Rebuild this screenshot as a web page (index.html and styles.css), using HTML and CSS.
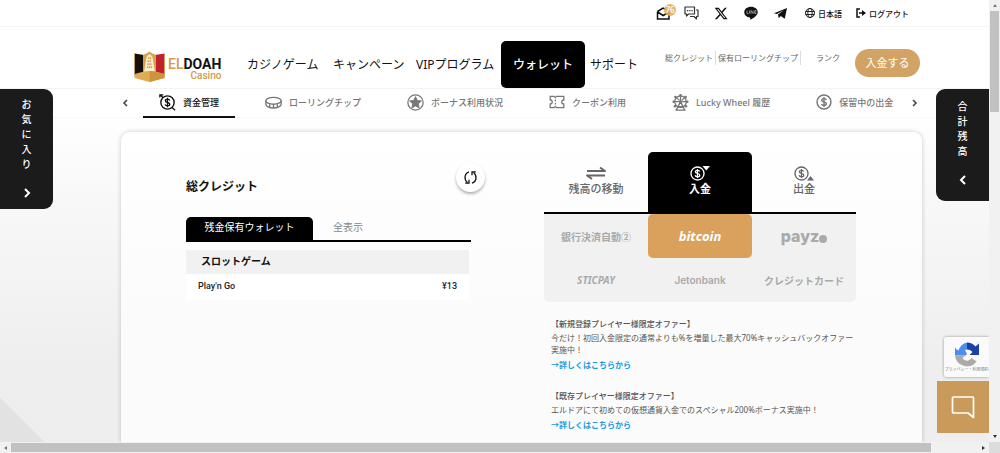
FILE: index.html
```html
<!DOCTYPE html>
<html lang="ja">
<head>
<meta charset="utf-8">
<meta name="viewport" content="width=device-width, initial-scale=1">
<title>ELDOAH Casino</title>
<link rel="stylesheet" href="styles.css">
</head>
<body>
<svg class="defs" aria-hidden="true">
  <symbol id="coin" viewBox="0 0 20 20"><circle cx="10" cy="10" r="8.7" fill="none" stroke="currentColor" stroke-width="1.8"/><path d="M13 7.4C12.6 6.2 11.5 5.7 10 5.7 8.300 5.700 7.100 6.500 7.100 7.800c0 3.100 5.900 1.300 5.900 4.400 0 1.300-1.200 2.100-3 2.100-1.700 0-2.800-.7-3.200-1.900M10 3.900v12.200" fill="none" stroke="currentColor" stroke-width="1.7"/></symbol>
</svg>
<div class="frame">
  <div class="page">
    <header>
      <div class="topbar">
        <a class="mail" href="#" aria-label="メール"><svg viewBox="0 0 16 14" width="16" height="14"><path d="M1.500 5.500v7.500h11.500V5.500M1.500 5.500 7 2l3 1.500M1.500 6 7.200 9.500 13 6" fill="none" stroke="#111" stroke-width="1.500"/></svg><span class="badge">76</span></a>
        <a href="#" aria-label="チャット"><svg viewBox="0 0 15 14" width="15" height="14"><path d="M1 1h9.500v7H4.500L2.500 10V8H1zM12 4h2v6.500h-1.500v2.500l-2.500-2.500H6" fill="none" stroke="#333" stroke-width="1.200" stroke-linejoin="round"/><path d="M3 4.600h1.300M5.200 4.600h1.300M7.400 4.600h1.300" stroke="#333" stroke-width="1.200"/></svg></a>
        <a href="#" aria-label="X"><svg viewBox="0 0 24 24" width="13" height="13"><path d="M18.200 1.500h3.700l-8 9.200L23.300 22.500h-7.400l-5.800-7.100-6.600 7.100H-.2l8.600-9.500L-.6 1.500H7l5.200 6.600zm-1.300 18.900h2L5.800 3.500H3.700z" fill="#111"/></svg></a>
        <a href="#" aria-label="LINE"><svg viewBox="0 0 26 25" width="14" height="14"><path d="M13 1C5.900 1 .5 5.400.5 11c0 5 4.200 9 10.300 9.700 1 .2.900 1.500.6 3.300 0 .6.400.8 1 .5 5.400-2.900 13.100-7.500 13.100-13.500C25.500 5.400 20.100 1 13 1z" fill="#111"/><path d="M5.500 8v5.500h3M10.500 7.500v6M13 14V8l4 5.500V8M23 8h-3v5.500h3M20 10.800h3" fill="none" stroke="#ccc" stroke-width="1.200"/></svg></a>
        <a href="#" aria-label="Telegram"><svg viewBox="0 0 26 22" width="13" height="11"><path d="M0 10.500 26 0l-4.500 21.500-8-5.500-4 4.500-1.500-7.500L20.500 3.500 6 12z" fill="#111"/></svg></a>
        <button class="lang"><svg viewBox="0 0 20 20" width="10" height="10"><g fill="none" stroke="#111" stroke-width="1.800"><circle cx="10" cy="10" r="9"/><ellipse cx="10" cy="10" rx="4.300" ry="9"/><path d="M1 7h18M1 13h18"/></g></svg>日本語</button>
        <a class="logout" href="#"><svg viewBox="0 0 20 20" width="10" height="10"><path d="M8 2H2v16h6" fill="none" stroke="#111" stroke-width="3"/><path d="M6 8.500h6V4l8 6-8 6v-4.500H6z" fill="#111"/></svg>ログアウト</a>
      </div>
      <div class="mainbar">
        <a class="logo" href="#" aria-label="ELDOAH Casino">
          <svg viewBox="0 0 62 62" width="31" height="31"><path d="M1 5l19 3v37L1 49z" fill="#15100e"/><path d="M61 5 42 8v37l19 4z" fill="#c3202c"/><path d="M31 1c5 4 9 5 13 7v38H18V8c4-2 8-3 13-7z" fill="#d7a14f"/><path d="M31 6c5 3 7 7 7 12l4 24H20l4-24c0-5 2-9 7-12z" fill="#fbedcb"/><path d="M27.500 14h7M27 20h8M26.500 26h9M26 32h10" stroke="#c38a35" stroke-width="2.500" stroke-dasharray="3 1"/><path d="M1 5v44M61 5v44" stroke="#d7a14f" stroke-width="1.500"/><path d="M1 46c10-3 20-6 30-6s20 3 30 6v8l-30 8L1 54z" fill="#e0ab55"/><path d="M31 40c10 0 20 3 30 6v8l-30 8z" fill="#cf923d"/></svg>
          <span class="word"><span class="name"><i>EL</i><b>DOAH</b></span><span class="sub">Casino</span></span>
        </a>
        <nav class="menu">
          <a href="#">カジノゲーム</a><a href="#">キャンペーン</a><a href="#">VIPプログラム</a><a class="on" href="#">ウォレット</a><a href="#">サポート</a>
        </nav>
        <div class="stats"><span>総クレジット</span><span>保有ローリングチップ</span><span class="rank">ランク</span></div>
        <button class="deposit">入金する</button>
      </div>
      <nav class="subnav">
        <button class="arrow" aria-label="前へ"><svg viewBox="0 0 6 8" width="6" height="8"><path d="M5 1 2 4l3 3" fill="none" stroke="#444" stroke-width="1.600"/></svg></button>
        <div class="subs">
          <a class="on" href="#"><svg width="17" height="17" viewBox="0 0 20 20"><use href="#coin" x="1" y="1" width="18" height="18"/><path d="M1 1l4 3.500M19 19l-4-3.500M1 4V1h4" fill="none" stroke="currentColor" stroke-width="1.500"/></svg>資金管理</a>
          <a href="#"><svg width="17" height="17" viewBox="0 0 20 20"><g fill="none" stroke="currentColor" stroke-width="1.600"><ellipse cx="10" cy="8" rx="9" ry="4"/><path d="M1 8v4c0 2.500 4 4.500 9 4.500s9-2 9-4.500V8M5.500 12v4M10 12.500v4M14.500 12v4"/></g></svg>ローリングチップ</a>
          <a href="#"><svg width="17" height="17" viewBox="0 0 20 20"><circle cx="10" cy="10" r="9" fill="none" stroke="currentColor" stroke-width="1.500"/><path d="M10 3l2.100 4.500 4.900.6-3.600 3.400.9 4.900L10 14l-4.300 2.400.9-4.900L3 8.100l4.900-.6z" fill="currentColor" stroke="currentColor" stroke-linejoin="round"/></svg>ボーナス利用状況</a>
          <a href="#"><svg width="16" height="16" viewBox="0 0 20 20"><path d="M1.500 3h5l1.500 1.500L9.500 3h9v4.500a2.500 2.500 0 0 0 0 5V17h-9L8 15.500 6.500 17h-5v-4.500a2.500 2.500 0 0 0 0-5z" fill="none" stroke="currentColor" stroke-width="1.600"/><path d="M8 7v2M8 11v2" stroke="currentColor" stroke-width="1.500"/></svg>クーポン利用</a>
          <a href="#"><svg width="17" height="17" viewBox="0 0 20 20"><g fill="none" stroke="currentColor" stroke-width="1.500"><circle cx="10" cy="9" r="6.800"/><path d="M10 2v5M3 9h5M12 9h5M5 4l3.500 3.500M15 4l-3.500 3.500M10 9l-5 10M10 9l5 10M4 19h12M7.500 15h5"/></g><g fill="currentColor"><circle cx="10" cy="9" r="2"/><circle cx="10" cy="1.500" r="1.500"/><circle cx="4" cy="3.500" r="1.500"/><circle cx="16" cy="3.500" r="1.500"/><circle cx="2" cy="9" r="1.500"/><circle cx="18" cy="9" r="1.500"/><circle cx="3.500" cy="14.500" r="1.500"/><circle cx="16.500" cy="14.500" r="1.500"/></g></svg>Lucky Wheel 履歴</a>
          <a href="#"><svg width="16" height="16"><use href="#coin"/></svg>保留中の出金</a>
        </div>
        <button class="arrow" aria-label="次へ"><svg viewBox="0 0 6 8" width="6" height="8"><path d="M1 1l3 3-3 3" fill="none" stroke="#444" stroke-width="1.600"/></svg></button>
      </nav>
    </header>
    <main class="card">
      <section class="credit">
        <div class="head"><h2>総クレジット</h2><button class="refresh" aria-label="更新"><svg viewBox="0 0 20 20" width="15" height="15"><path d="M8 2.500C1 5 1.500 13 6 17M12 17.500C19 15 18.500 7 14 3" fill="none" stroke="#111" stroke-width="1.700"/><path d="M3 17.500h5V13M17 2.500h-5V7" fill="none" stroke="#111" stroke-width="1.700"/></svg></button></div>
        <div class="tabs"><button class="on">残金保有ウォレット</button><button>全表示</button></div>
        <table>
          <thead><tr><th colspan="2">スロットゲーム</th></tr></thead>
          <tbody><tr><td>Play'n Go</td><td class="num">¥13</td></tr></tbody>
        </table>
      </section>
      <section class="funds">
        <div class="modes">
          <button><svg width="20" height="16" viewBox="0 0 20 16"><path d="M1 6h18L14 2.500M19 10.500H1l5 3.500" fill="none" stroke="currentColor" stroke-width="2" stroke-linejoin="round"/></svg>残高の移動</button>
          <button class="on"><svg width="20" height="16" viewBox="0 0 20 16"><use href="#coin" x="0" y="1" width="15" height="15"/><path d="M12.500 1h7.500l-3.700 4.500z" fill="currentColor"/></svg>入金</button>
          <button><svg width="20" height="16" viewBox="0 0 20 16"><use href="#coin" x="0" y="1" width="15" height="15"/><path d="M13 15.500h7L16.500 11z" fill="currentColor"/></svg>出金</button>
        </div>
        <div class="methods">
          <button>銀行決済自動②</button>
          <button class="bitcoin">bitcoin</button>
          <button class="payz">payz<span class="dot"></span></button>
          <button class="sticpay">STICPAY</button>
          <button class="jeton">Jetonbank</button>
          <button>クレジットカード</button>
        </div>
        <div class="offers">
          <article><h3>【新規登録プレイヤー様限定オファー】</h3><p>今だけ！初回入金限定の通常よりも%を増量した最大70%キャッシュバックオファー実施中！</p><a href="#">→詳しくはこちらから</a></article>
          <article><h3>【既存プレイヤー様限定オファー】</h3><p>エルドアにて初めての仮想通貨入金でのスペシャル200%ボーナス実施中！</p><a href="#">→詳しくはこちらから</a></article>
        </div>
      </section>
    </main>
    <button class="side left"><span>お気に入り</span><svg viewBox="0 0 8 10" width="8" height="10"><path d="M2 1l4 4-4 4" fill="none" stroke="#fff" stroke-width="2"/></svg></button>
    <button class="side right"><span>合計残高</span><svg viewBox="0 0 8 10" width="8" height="10"><path d="M6 1 2 5l4 4" fill="none" stroke="#fff" stroke-width="2"/></svg></button>
    <div class="floats">
      <div class="captcha"><svg viewBox="0 0 52 50" width="26" height="25"><path d="M4 14l5 3A24 24 0 0 1 26 1v14l-4 1 4 8-3 3H2V10z" fill="#4a90e8"/><path d="M26 1a24 24 0 0 1 17 8l7-6v23H31l6-6a12 12 0 0 0-11-5z" fill="#1c3fa8"/><path d="M2 27h21l-6 5c5 7 13 7 18 0l10 7A24 24 0 0 1 2 27z" fill="#aaa"/></svg><small>プライバシー・利用規約</small></div>
      <button class="chat" aria-label="チャットを開く"><svg viewBox="0 0 24 24" width="24" height="24"><path d="M2.500 2h19a1 1 0 0 1 1 1v19.500L17 18H2.500a1 1 0 0 1-1-1V3a1 1 0 0 1 1-1z" fill="none" stroke="#fff" stroke-width="1.700" stroke-linejoin="round"/></svg></button>
    </div>
  </div>
  <div class="vbar"><i class="up"></i><span class="thumb"></span><i class="down"></i></div>
  <div class="hbar"><i class="prev"></i><span class="thumb"></span><i class="next"></i></div>
  <div class="corner"></div>
</div>
</body>
</html>
```
FILE: styles.css
```css
* { box-sizing: border-box; }
body { margin: 0; font-family: "Noto Sans", "Noto Sans CJK JP", sans-serif; font-size: 8px; color: #111; }
button { font: inherit; color: inherit; border: 0; background: none; padding: 0; margin: 0; cursor: pointer; }
a { color: inherit; text-decoration: none; }
h2, h3, p { margin: 0; }
svg { display: block; flex: none; }
.defs { position: absolute; width: 0; height: 0; }

.frame { display: grid; grid-template-columns: minmax(0, 1fr) 11px; grid-template-rows: minmax(0, 1fr) 11px; height: 100vh; overflow: hidden; }
.page {
  position: relative; display: flex; flex-direction: column; overflow: hidden;
  background: linear-gradient(45deg, #e2e2e2 31px, transparent 32px), linear-gradient(#fff 110px, #f8f8f8 200px, #eeeeee 370px);
}

/* Header */
header { background: #fff; }
.topbar { display: flex; justify-content: flex-end; align-items: center; height: 27px; padding-right: 80px; gap: 16px; border-bottom: 1px solid #f3f3f3; }
.topbar a, .topbar button { display: flex; align-items: center; gap: 3px; font-weight: 500; }
.mail { position: relative; margin-right: -4px; }
.topbar .badge { position: absolute; left: 8px; top: -2px; width: 12px; height: 12px; border-radius: 6px; background: #e3ad5c; color: #fff; line-height: 12px; text-align: center; opacity: .9; }
.lang { margin-left: 2px; }
.topbar .logout { margin-left: -2px; }
.mainbar { display: flex; align-items: center; height: 62px; padding: 0 69px 0 134px; border-bottom: 1px solid #f3f3f3; }
.logo { display: flex; align-items: center; gap: 3px; width: 113px; padding-top: 18px; }
.word { display: flex; flex-direction: column; align-items: flex-end; padding-top: 4px; font-family: Roboto, sans-serif; }
.name { font-size: 14px; line-height: 14px; }
.name i { font-style: normal; font-weight: 500; color: #d19a4c; }
.sub { font-size: 10px; line-height: 10px; font-weight: 500; color: #d19a4c; }
.menu { display: grid; grid-template-columns: 86px 83px 85px 84px auto; align-items: center; font-size: 12px; line-height: 47px; padding-top: 14px; white-space: nowrap; }
.menu .on { background: #000; color: #fff; font-weight: 500; border-radius: 5px; text-align: center; }
.menu a:last-child { padding-left: 5px; }
.stats { display: flex; margin-left: auto; color: #666; line-height: 14px; white-space: nowrap; }
.stats span { padding: 0 2px; border-right: 1px solid #ddd; }
.stats .rank { border: 0; padding: 0 15px; }
.deposit { width: 65px; height: 28px; margin-top: 10px; border-radius: 14px; background: #d3a365; color: #fff; font-size: 11px; line-height: 28px; }
.subnav { display: flex; align-items: center; height: 29px; padding: 0 71px 0 122px; border-bottom: 1px solid #f7f7f7; }
.subs { display: flex; gap: 14px; margin: 0 auto 0 15px; color: #777; font-size: 9px; font-weight: 500; white-space: nowrap; }
.subs a { display: flex; align-items: center; gap: 7px; height: 29px; padding: 0 16px; border-bottom: 2px solid transparent; }
.subs .on { color: #111; border-color: #111; }

/* Wallet card */
.card { flex: 1; display: grid; grid-template-columns: 285fr 312fr; gap: 73px; margin: 14px 67px 0 121px; padding: 20px 66px 0 65px; background: linear-gradient(#fff, #fbfbfb 60%); border-radius: 9px 9px 0 0; box-shadow: 0 0 5px rgba(0, 0, 0, .2); }
.head { display: flex; align-items: center; justify-content: space-between; height: 65px; margin-right: -14px; }
.head h2 { font-size: 12px; font-weight: 700; padding-top: 3px; }
.refresh { display: grid; place-items: center; width: 29px; height: 29px; margin-bottom: 14px; border-radius: 50%; background: #fff; box-shadow: 0 2px 3px rgba(0, 0, 0, .3); }
.tabs { display: flex; border-bottom: 2px solid #000; font-size: 10px; line-height: 21px; color: #888; }
.tabs button { padding: 0 20px 2px; height: 23px; }
.tabs .on { width: 127px; background: #000; color: #fff; border-radius: 5px 5px 0 0; padding: 0 0 2px; }
table { width: calc(100% - 2px); margin-top: 8px; border-collapse: collapse; background: #fff; }
th { height: 24px; padding: 0 15px 2px; background: #f1f1f1; font-size: 10px; line-height: 14px; text-align: left; }
td { height: 26px; padding: 0 12px 2px; font: 500 9px/14px Roboto, sans-serif; color: #222; }
.num { text-align: right; }

.modes { display: grid; grid-template-columns: repeat(3, 1fr); border-bottom: 2px solid #000; color: #666; font-size: 11px; line-height: 16px; font-weight: 500; }
.modes button { display: flex; flex-direction: column; align-items: center; height: 60px; padding-top: 13px; }
.modes .on { background: #000; color: #fff; border-radius: 5px 5px 0 0; font-weight: 700; }
.methods { display: grid; grid-template-columns: repeat(3, 1fr); grid-auto-rows: 44px; background: #f1f1f1; border-radius: 0 0 5px 5px; color: #aaa; font-size: 10px; font-weight: 700; }
.methods .bitcoin { background: #d9a15c; color: #fff; border-radius: 5px; font-size: 13px; font-style: italic; }
.methods .payz { display: flex; align-items: center; justify-content: center; font: 800 16px Inter, sans-serif; }
.dot { width: 8px; height: 8px; margin-top: 6px; border-radius: 50%; background: currentColor; }
.methods .sticpay { font-style: italic; }
.methods .jeton { font: 600 10px Inter, sans-serif; }
.offers { display: flex; flex-direction: column; gap: 16px; padding: 15px 0 0 7px; line-height: 12px; color: #555; }
.offers h3 { font-size: 8px; font-weight: 500; line-height: 14px; }
.offers p { padding-top: 1px; }
.offers a { display: block; font-weight: 700; line-height: 17px; color: #1d9ae0; }

/* Side tabs and floating buttons */
.side { position: absolute; top: 89px; display: flex; flex-direction: column; align-items: center; gap: 16px; width: 53px; padding: 8px 0 11px; background: #1b1b1b; color: #fff; font-size: 10px; font-weight: 500; line-height: 15px; }
.side span { width: 11px; overflow-wrap: anywhere; }
.left { left: 0; border-radius: 0 9px 9px 0; }
.right { right: 0; border-radius: 9px 0 0 9px; padding: 10px 0 16px; }
.floats { position: absolute; right: 0; bottom: 9px; display: flex; flex-direction: column; align-items: flex-end; gap: 4px; }
.captcha { display: flex; flex-direction: column; align-items: center; justify-content: center; width: 45px; height: 40px; background: #fafafa; border-radius: 2px 0 0 2px; box-shadow: 0 0 3px rgba(0, 0, 0, .4); overflow: hidden; }
.captcha small { font-size: 4px; line-height: 6px; color: #777; white-space: nowrap; }
.chat { display: grid; place-items: center; width: 52px; height: 52px; background: #c99a5a; }

/* Scroll bars */
.vbar, .hbar { display: flex; align-items: center; background: #f1f1f1; }
.vbar { flex-direction: column; }
.hbar { grid-row: 2; }
.corner { background: #dcdcdc; }
.thumb { background: #c1c1c1; }
.vbar .thumb { width: 9px; height: 101px; margin-bottom: auto; }
.hbar .thumb { height: 9px; width: 93%; margin-right: auto; }
.vbar i, .hbar i { display: grid; place-items: center; width: 11px; height: 11px; flex: none; }
.vbar i::before, .hbar i::before { content: ""; border: 2px solid transparent; }
.vbar .up::before { border-bottom: 3px solid #777; border-top: 0; }
.vbar .down::before { border-top: 3px solid #333; border-bottom: 0; }
.hbar .prev::before { border-right: 3px solid #777; border-left: 0; }
.hbar .next::before { border-left: 3px solid #333; border-right: 0; }
```
